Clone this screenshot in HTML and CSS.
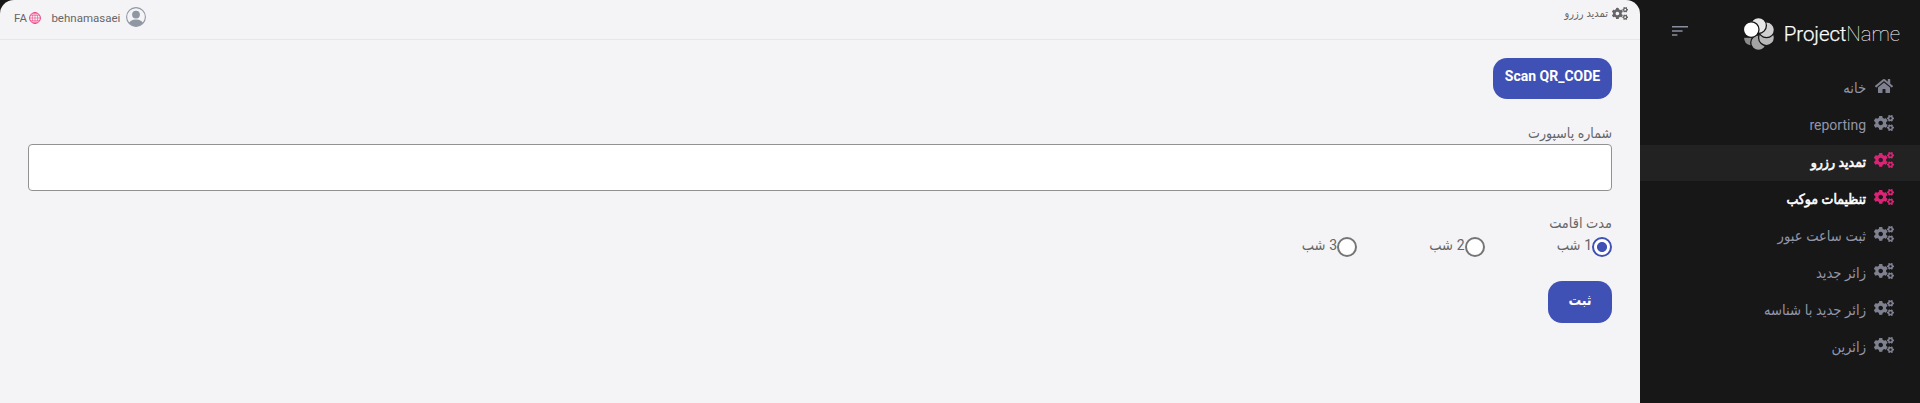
FILE: index.html
```html
<!DOCTYPE html>
<html lang="fa" dir="rtl">
<head>
<meta charset="utf-8">
<title>ProjectName</title>
<link rel="stylesheet" href="styles.css">
</head>
<body>
<svg class="sprite" width="0" height="0">
  <symbol id="cogs" viewBox="0 0 640 512">
    <path id="small-cog" d="M512.1 191l-8.2 14.3c-3 5.3-9.4 7.5-15.1 5.4-11.8-4.4-22.6-10.7-32.1-18.6-4.6-3.8-5.8-10.5-2.8-15.7l8.2-14.3c-6.9-8-12.3-17.3-15.9-27.4h-16.5c-6 0-11.2-4.3-12.2-10.3-2-12-2.1-24.6 0-37.1 1-6 6.2-10.4 12.2-10.4h16.5c3.6-10.1 9-19.4 15.9-27.4l-8.2-14.3c-3-5.2-1.9-11.9 2.8-15.7 9.5-7.9 20.4-14.2 32.1-18.6 5.7-2.1 12.1.1 15.1 5.4l8.2 14.3c10.5-1.9 21.2-1.9 31.7 0L552 6.3c3-5.3 9.4-7.5 15.1-5.4 11.8 4.4 22.6 10.7 32.1 18.6 4.6 3.8 5.8 10.5 2.8 15.7l-8.2 14.3c6.9 8 12.3 17.3 15.9 27.4h16.5c6 0 11.2 4.3 12.2 10.3 2 12 2.1 24.6 0 37.1-1 6-6.2 10.4-12.2 10.4h-16.5c-3.6 10.1-9 19.4-15.9 27.4l8.2 14.3c3 5.2 1.9 11.9-2.8 15.7-9.5 7.9-20.4 14.2-32.1 18.6-5.7 2.1-12.1-.1-15.1-5.4l-8.2-14.3c-10.4 1.9-21.2 1.9-31.7 0zm-10.5-58.8c38.5 29.6 82.4-14.3 52.8-52.8-38.5-29.7-82.4 14.3-52.8 52.8z"/>
    <use href="#small-cog" y="300"/>
    <path d="M386.3 286.1l33.7 16.8c10.1 5.8 14.5 18.1 10.5 29.1-8.9 24.2-26.4 46.4-42.6 65.8-7.4 8.9-20.2 11.1-30.3 5.3l-29.1-16.8c-16 13.7-34.6 24.6-54.9 31.7v33.6c0 11.6-8.3 21.6-19.7 23.6-24.6 4.2-50.4 4.4-75.9 0-11.5-2-20-11.9-20-23.6V418c-20.3-7.2-38.9-18-54.9-31.7L74 403c-10 5.8-22.9 3.6-30.3-5.3-16.2-19.4-33.3-41.6-42.2-65.7-4-10.9.4-23.2 10.5-29.1l33.3-16.8c-3.9-20.9-3.9-42.4 0-63.4L12 205.8c-10.1-5.8-14.6-18.1-10.5-29 8.9-24.2 26-46.4 42.2-65.8 7.4-8.9 20.2-11.1 30.3-5.3l29.1 16.8c16-13.7 34.6-24.6 54.9-31.7V57.1c0-11.5 8.2-21.5 19.6-23.5 24.6-4.2 50.5-4.4 76-.1 11.5 2 20 11.9 20 23.6v33.6c20.3 7.2 38.9 18 54.9 31.7l29.1-16.8c10-5.8 22.9-3.6 30.3 5.3 16.2 19.4 33.2 41.6 42.1 65.8 4 10.9.1 23.2-10 29.1l-33.7 16.8c3.9 21 3.9 42.5 0 63.5zm-117.6 21.1c59.2-77-28.7-164.9-105.7-105.7-59.2 77 28.7 164.9 105.7 105.7z"/>
  </symbol>
  <symbol id="home" viewBox="0 0 576 512">
    <path d="M280.37 148.26L96 300.11V464a16 16 0 0 0 16 16l112.06-.29a16 16 0 0 0 15.92-16V368a16 16 0 0 1 16-16h64a16 16 0 0 1 16 16v95.64a16 16 0 0 0 16 16.05L464 480a16 16 0 0 0 16-16V300L295.67 148.26a12.19 12.19 0 0 0-15.3 0zM571.6 251.47L488 182.56V44.05a12 12 0 0 0-12-12h-56a12 12 0 0 0-12 12v72.61L318.47 43a48 48 0 0 0-61 0L4.34 251.47a12 12 0 0 0-1.6 16.9l25.5 31A12 12 0 0 0 45.15 301l235.22-193.74a12.19 12.19 0 0 1 15.3 0L530.9 301a12 12 0 0 0 16.9-1.6l25.5-31a12 12 0 0 0-1.7-16.93z"/>
  </symbol>
</svg>
<div class="app">
  <aside class="sidebar">
    <div class="brand">
      <div class="logo" dir="ltr">
        <svg class="logo-mark" viewBox="0 0 30 32">
          <g stroke="#171717" stroke-width="1.3">
            <path d="M-.6 19.2H13V28H6C2 27-.6 24-.6 19.2z" fill="#8c8c8c"/>
            <circle cx="14.5" cy="24.7" r="7.8" fill="#a3a3a3"/>
            <circle cx="22.5" cy="19.7" r="7.9" fill="#b9b9b9"/>
            <circle cx="22.5" cy="11.8" r="7.9" fill="#d0d0d0"/>
            <circle cx="14.5" cy="7.5" r="7.9" fill="#e6e6e6"/>
            <circle cx="7.2" cy="11.6" r="7.8" fill="#fff"/>
          </g>
        </svg>
        <span class="logo-text">Project<span class="logo-thin">Name</span></span>
      </div>
      <svg class="burger" viewBox="0 0 16 10"><path d="M0 0h16v1.6H0zM0 4.2h10.6v1.6H0zM0 8.2h5.4v1.6H0z"/></svg>
    </div>
    <nav class="menu">
      <a class="item"><svg class="icon home"><use href="#home"/></svg><span>خانه</span></a>
      <a class="item"><svg class="icon"><use href="#cogs"/></svg><span class="latin">reporting</span></a>
      <a class="item open current"><svg class="icon"><use href="#cogs"/></svg><span>تمدید رزرو</span></a>
      <a class="item open"><svg class="icon"><use href="#cogs"/></svg><span>تنظیمات موکب</span></a>
      <a class="item"><svg class="icon"><use href="#cogs"/></svg><span>ثبت ساعت عبور</span></a>
      <a class="item"><svg class="icon"><use href="#cogs"/></svg><span>زائر جدید</span></a>
      <a class="item"><svg class="icon"><use href="#cogs"/></svg><span>زائر جدید با شناسه</span></a>
      <a class="item"><svg class="icon"><use href="#cogs"/></svg><span>زائرین</span></a>
    </nav>
  </aside>
  <main class="page">
    <header class="topbar">
      <div class="crumb"><svg class="crumb-icon"><use href="#cogs"/></svg><span>تمدید رزرو</span></div>
      <div class="account" dir="ltr">
        <span class="lang">FA</span>
        <svg class="globe" viewBox="0 0 12 12"><g fill="none" stroke="#f0256f" stroke-width=".5"><circle cx="6" cy="6" r="5.4" stroke-width=".9"/><ellipse cx="6" cy="6" rx="2.7" ry="5.3"/><path d="M6 .7v10.6M.7 6h10.6M1.6 3.3h8.8M1.6 8.7h8.8"/></g></svg>
        <span class="user">behnamasaei</span>
        <svg class="avatar" viewBox="0 0 20 20"><defs><clipPath id="disc"><circle cx="10" cy="10" r="9.3"/></clipPath></defs><circle cx="10" cy="10" r="9.4" fill="none" stroke="#8f97a3" stroke-width="1.1"/><circle cx="10" cy="7.6" r="3.9" fill="#8f97a3"/><ellipse cx="10" cy="17.4" rx="7.4" ry="4.8" fill="#8f97a3" clip-path="url(#disc)"/></svg>
      </div>
    </header>
    <form class="form">
      <button class="btn scan" type="button" dir="ltr">Scan QR_CODE</button>
      <label class="label passport" for="passport">شماره پاسپورت</label>
      <input class="field" id="passport" type="text">
      <div class="label stay">مدت اقامت</div>
      <div class="options">
        <label class="option"><i class="radio on"></i><span><b>1</b> شب</span></label>
        <label class="option"><i class="radio"></i><span><b>2</b> شب</span></label>
        <label class="option"><i class="radio"></i><span><b>3</b> شب</span></label>
      </div>
      <button class="btn submit" type="button">ثبت</button>
    </form>
  </main>
</div>
</body>
</html>
```
FILE: styles.css
```css
* { box-sizing: border-box; }
body {
  margin: 0;
  background: #171717;
  color: #666;
  font-family: Roboto, "DejaVu Sans Condensed", "DejaVu Sans", sans-serif;
  font-size: 14px;
}
.sprite { position: absolute; }
.app { display: flex; height: 403px; overflow: hidden; }

.sidebar { width: 280px; flex: none; background: #171717; }
.brand {
  display: flex;
  align-items: flex-start;
  justify-content: space-between;
  height: 69px;
  padding: 17px 20px 0 32px;
}
.logo { display: flex; align-items: center; }
.logo-mark { width: 30px; height: 32px; margin-right: 10px; }
.logo-text { color: #fff; font-size: 20.5px; font-weight: 300; line-height: 34px; white-space: nowrap; letter-spacing: -.1px; -webkit-text-stroke: .25px #fff; }
.logo-thin { font-weight: 100; -webkit-text-stroke: 0; }
.burger { width: 16px; height: 10px; margin-top: 9px; fill: #8a8f9f; }

.menu { display: flex; flex-direction: column; gap: 1px; padding-top: 2px; }
.item {
  display: flex;
  align-items: center;
  height: 36px;
  padding-right: 26px;
  color: #9295a8;
  font-size: 14.6px;
}
.item span { margin: -2px 8px 0 0; white-space: nowrap; }
.item .latin { font-size: 14px; }
.icon { width: 20px; height: 16px; margin-top: -6px; fill: #7f8191; }
.open { color: #fff; font-size: 14px; -webkit-text-stroke: .6px #fff; }
.open .icon { fill: #dc2376; -webkit-text-stroke: 0; }
.current { background: #222; }

.page {
  flex: 1;
  background: #f4f4f7;
  border-radius: 14px 14px 0 0;
  overflow: hidden;
}
.topbar {
  display: flex;
  align-items: flex-start;
  justify-content: space-between;
  height: 40px;
  padding: 0 12px 0 14px;
  border-bottom: 1px solid #e6e7ea;
}
.crumb { display: flex; align-items: center; gap: 4px; height: 27px; font-size: 11px; }
.crumb-icon { width: 16px; height: 13px; fill: #666; }
.account { display: flex; align-items: center; height: 36px; font-size: 11.5px; }
.globe { width: 12px; height: 12px; margin-left: 2px; }
.user { margin-left: 10.5px; }
.avatar { width: 20px; height: 20px; margin: -2px 0 0 5.5px; }

.form { display: flex; flex-direction: column; align-items: flex-start; padding: 18px 28px 0; }
.btn {
  border: 0;
  border-radius: 14px;
  background: #3f51b5;
  color: #fff;
  font-family: inherit;
  font-weight: 700;
  font-size: 14px;
  padding: 0 0 5px;
}
.scan { width: 119px; height: 41px; }
.submit { width: 64px; height: 42px; margin-top: 24px; }
.label { line-height: 22px; font-size: 14.4px; }
.passport { margin-top: 23px; height: 22px; font-size: 14px; }
.field { width: 100%; height: 47px; border: 1px solid #929292; border-radius: 4px; background: #fff; }
.stay { margin-top: 22px; height: 24px; }
.options { display: flex; align-items: flex-start; }
.option { display: flex; width: 127.5px; line-height: 16px; font-size: 14.5px; }
.option b { font-weight: 400; font-size: 14px; }
.radio { width: 20px; height: 20px; border: 2px solid #757575; border-radius: 50%; background: #fff; }
.radio.on { border-color: #3f51b5; background: radial-gradient(circle, #3f51b5 4.6px, #fff 5.4px); }
```
